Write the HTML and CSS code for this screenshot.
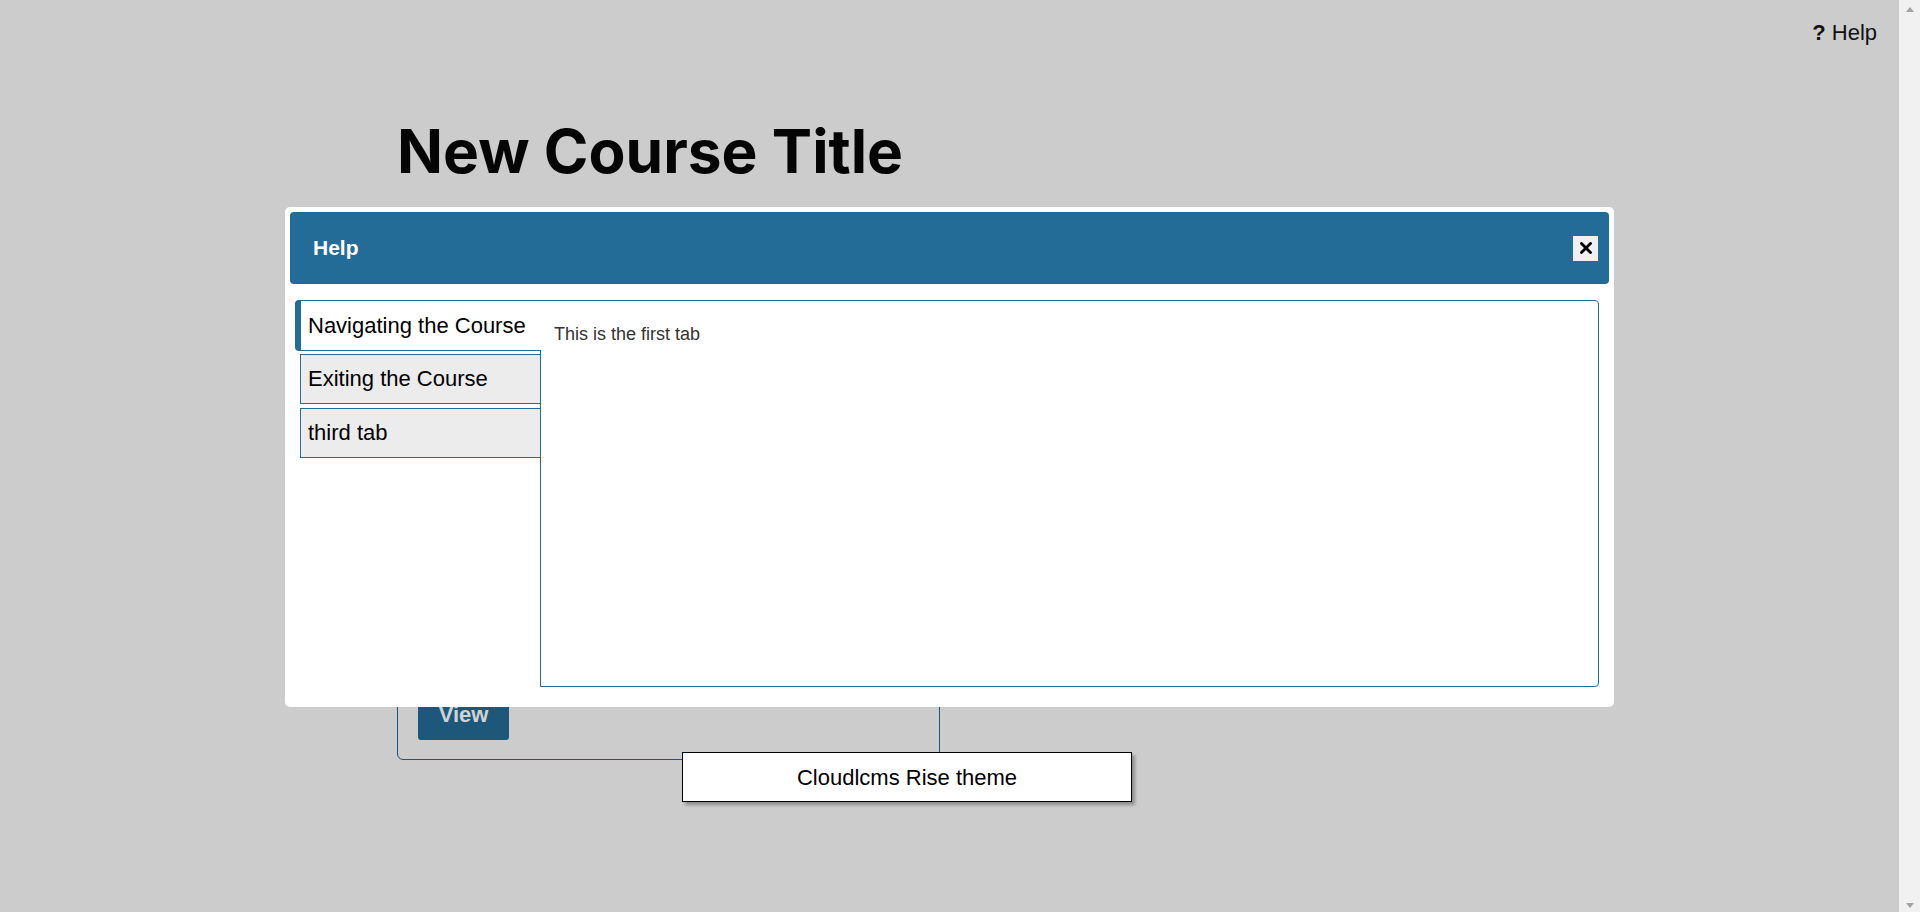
FILE: index.html
```html
<!DOCTYPE html>
<html lang="en">
<head>
<meta charset="utf-8">
<title>New Course Title</title>
<link rel="stylesheet" href="styles.css">
</head>
<body>
<div class="app">
  <div class="page">
    <header class="topbar">
      <a class="help-link" href="#"><b class="help-q">?</b> Help</a>
    </header>
    <main class="course">
      <h1 class="course-title">New Course Title</h1>
      <section class="card">
        <button class="view-btn" type="button">View</button>
      </section>
    </main>
    <div class="theme-badge">Cloudlcms Rise theme</div>

    <div class="modal" role="dialog" aria-label="Help">
      <div class="modal-header">
        <h2 class="modal-title">Help</h2>
        <button class="close-btn" type="button" aria-label="Close">
          <svg width="12" height="12" viewBox="0 0 12 12"><path d="M1.5 1.5 L10.5 10.5 M10.5 1.5 L1.5 10.5" stroke="#000" stroke-width="2.8" stroke-linecap="square"/></svg>
        </button>
      </div>
      <div class="modal-body">
        <ul class="tabs">
          <li class="tab active">Navigating the Course</li>
          <li class="tab">Exiting the Course</li>
          <li class="tab">third tab</li>
        </ul>
        <div class="tab-panel">
          <p class="tab-text">This is the first tab</p>
        </div>
      </div>
    </div>
  </div>
  <div class="scrollbar">
    <span class="arrow arrow-up"></span>
    <span class="arrow arrow-down"></span>
  </div>
</div>
</body>
</html>
```

FILE: styles.css
```css
html, body {
  margin: 0;
  padding: 0;
  height: 100%;
}
body {
  font-family: "Liberation Sans", Arial, sans-serif;
  color: #000;
  overflow: hidden;
}
.app {
  display: flex;
  height: 912px;
}
.page {
  flex: 1;
  position: relative;
  background: #cccccc;
}
.scrollbar {
  width: 21px;
  background: #f1f1f1;
  display: flex;
  flex-direction: column;
  justify-content: space-between;
  align-items: center;
  padding: 7px 0 4px;
  box-sizing: border-box;
}
.arrow {
  width: 0;
  height: 0;
  border-left: 4px solid transparent;
  border-right: 4px solid transparent;
}
.arrow-up { border-bottom: 5px solid #a3a3a3; }
.arrow-down { border-top: 5px solid #a3a3a3; }

.topbar {
  display: flex;
  justify-content: flex-end;
  padding: 20px 22px 0 0;
}
.help-link {
  font-size: 22px;
  line-height: 25px;
  color: #111;
  text-decoration: none;
}
.help-q { font-weight: 700; }

.course {
  padding-left: 397px;
  width: 543px;
}
.course-title {
  font-family: Inter, "Liberation Sans", sans-serif;
  font-weight: 700;
  font-size: 60.4px;
  line-height: 72px;
  margin: 70px 0 0 0;
  color: #050505;
}
.card {
  margin-top: 31px;
  height: 542px;
  box-sizing: border-box;
  border: 1px solid #1c567a;
  border-radius: 6px;
  display: flex;
  flex-direction: column;
  justify-content: flex-end;
  align-items: flex-start;
  padding: 0 20px 19px;
}
.view-btn {
  height: 50px;
  width: 91px;
  border: none;
  border-radius: 3px;
  background: #1d577a;
  color: #cfd3d6;
  font-family: "Liberation Sans", Arial, sans-serif;
  font-weight: 700;
  font-size: 22px;
  padding: 0;
}

.theme-badge {
  position: absolute;
  left: 682px;
  top: 752px;
  width: 450px;
  height: 50px;
  box-sizing: border-box;
  border: 1px solid #000;
  background: #fff;
  box-shadow: 3px 3px 3px rgba(0, 0, 0, 0.3);
  display: flex;
  align-items: center;
  justify-content: center;
  font-size: 22px;
  padding-top: 1px;
}

.modal {
  position: absolute;
  left: 285px;
  top: 207px;
  width: 1329px;
  height: 500px;
  box-sizing: border-box;
  padding: 5px;
  background: #fff;
  border-radius: 5px;
  display: flex;
  flex-direction: column;
}
.modal-header {
  height: 72px;
  flex: none;
  background: #246c98;
  border-radius: 4px;
  display: flex;
  align-items: center;
  justify-content: space-between;
  padding: 0 11px 0 23px;
}
.modal-title {
  margin: 0;
  font-size: 21px;
  font-weight: 700;
  color: #fff;
}
.close-btn {
  width: 25px;
  height: 25px;
  border: none;
  padding: 0;
  background: #f0f0f0;
  display: flex;
  align-items: center;
  justify-content: center;
}
.modal-body {
  flex: 1;
  display: flex;
  padding: 16px 10px 15px 5px;
  min-height: 0;
}
.tabs {
  list-style: none;
  margin: 0 -1px 0 0;
  padding: 0;
  width: 246px;
  flex: none;
  position: relative;
  z-index: 1;
  display: flex;
  flex-direction: column;
  gap: 4px;
}
.tab {
  height: 50px;
  box-sizing: border-box;
  margin-left: 5px;
  border: 1px solid #246c98;
  background: #ececec;
  font-size: 22px;
  display: flex;
  align-items: center;
  padding: 0 7px;
  white-space: nowrap;
}
.tab.active {
  margin-left: 0;
  background: #fff;
  border-left: 6px solid #246c98;
  border-right: none;
  border-radius: 4px 0 0 4px;
  height: 51px;
  margin-bottom: -1px;
}
.tab-panel {
  flex: 1;
  border: 1px solid #246c98;
  border-radius: 0 4px 4px 0;
  padding: 23px 13px;
  box-sizing: border-box;
}
.tab-text {
  margin: 0;
  font-size: 18px;
  line-height: 21px;
  color: #333;
}
```
